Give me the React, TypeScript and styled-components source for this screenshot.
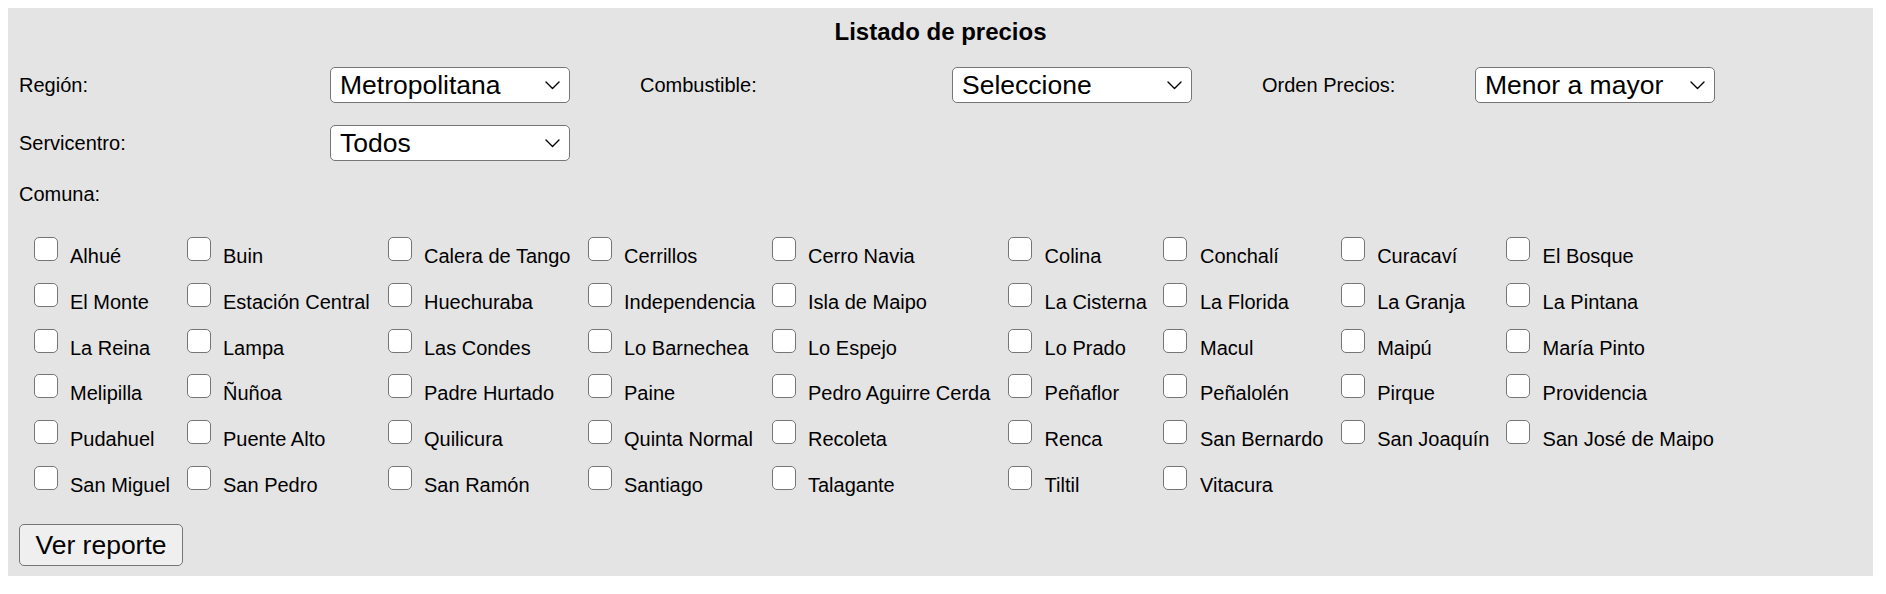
import React from "react";
import styled, { createGlobalStyle } from "styled-components";

const GlobalStyle = createGlobalStyle`
  html, body {
    margin: 0;
    padding: 0;
    background: #ffffff;
  }
  body {
    margin: 8px;
    font-family: "Liberation Sans", Arial, Helvetica, sans-serif;
    color: #000;
  }
`;

const Panel = styled.section`
  width: 1865px;
  box-sizing: border-box;
  background: #e4e4e4;
  padding: 10px 0 10px;
`;

const Title = styled.h1`
  margin: 0;
  font-size: 24px;
  line-height: 28px;
  font-weight: 700;
  text-align: center;
`;

const Body = styled.div`
  padding-left: 11px;
`;

const Filters = styled.div`
  display: grid;
  grid-template-columns: 311px 310px 312px 310px 213px 240px;
  row-gap: 22px;
  align-items: center;
  margin-top: 21px;
`;

const FieldLabel = styled.label<{ $rowStart?: boolean }>`
  font-size: 20px;
  line-height: 23px;
  ${(p) => (p.$rowStart ? "grid-column: 1;" : "")}
`;

const SelectWrap = styled.div`
  position: relative;
  width: 240px;
  height: 36px;
`;

const Select = styled.select`
  appearance: none;
  -webkit-appearance: none;
  width: 100%;
  height: 100%;
  box-sizing: border-box;
  margin: 0;
  padding: 0 34px 0 9px;
  font-family: "Liberation Sans", Arial, Helvetica, sans-serif;
  font-size: 26.5px;
  line-height: 34px;
  color: #000;
  background: #ffffff;
  border: 1.5px solid #767676;
  border-radius: 5px;
  outline: none;
`;

const Chevron = styled.svg`
  position: absolute;
  right: 10px;
  top: 14px;
  width: 15px;
  height: 9px;
  pointer-events: none;
`;

const CommuneGrid = styled.div`
  display: grid;
  grid-template-columns: 153px 201px 200px 184px 236.6px 155.4px 177.2px 165.4px auto;
  grid-auto-rows: 45.8px;
  margin: 24px 0 0 14.5px;
`;

const Commune = styled.label`
  display: flex;
  align-items: flex-start;
  gap: 12.5px;
  padding-top: 7px;
  font-size: 20px;
  line-height: 23px;
  white-space: nowrap;
`;

const Box = styled.input`
  appearance: none;
  -webkit-appearance: none;
  flex: none;
  width: 24px;
  height: 24px;
  margin: 0;
  box-sizing: border-box;
  background: #ffffff;
  border: 1.5px solid #767676;
  border-radius: 5px;
`;

const CommuneName = styled.span`
  margin-top: 8px;
`;

const ReportButton = styled.button`
  display: block;
  margin-top: 19.5px;
  width: 164px;
  height: 42px;
  box-sizing: border-box;
  padding: 0;
  font-family: "Liberation Sans", Arial, Helvetica, sans-serif;
  font-size: 26.5px;
  color: #000;
  background: #efefef;
  border: 1.5px solid #767676;
  border-radius: 5px;
`;

const communes = [
  "Alhué", "Buin", "Calera de Tango", "Cerrillos", "Cerro Navia", "Colina", "Conchalí", "Curacaví", "El Bosque",
  "El Monte", "Estación Central", "Huechuraba", "Independencia", "Isla de Maipo", "La Cisterna", "La Florida", "La Granja", "La Pintana",
  "La Reina", "Lampa", "Las Condes", "Lo Barnechea", "Lo Espejo", "Lo Prado", "Macul", "Maipú", "María Pinto",
  "Melipilla", "Ñuñoa", "Padre Hurtado", "Paine", "Pedro Aguirre Cerda", "Peñaflor", "Peñalolén", "Pirque", "Providencia",
  "Pudahuel", "Puente Alto", "Quilicura", "Quinta Normal", "Recoleta", "Renca", "San Bernardo", "San Joaquín", "San José de Maipo",
  "San Miguel", "San Pedro", "San Ramón", "Santiago", "Talagante", "Tiltil", "Vitacura",
];

function Dropdown({ value }: { value: string }) {
  return (
    <SelectWrap>
      <Select defaultValue={value}>
        <option value={value}>{value}</option>
      </Select>
      <Chevron viewBox="0 0 15 9">
        <path d="M1 1 L7.5 7.5 L14 1" fill="none" stroke="#000" strokeWidth="1.4" strokeLinecap="round" strokeLinejoin="round" />
      </Chevron>
    </SelectWrap>
  );
}

export default function App() {
  return (
    <>
      <GlobalStyle />
      <Panel>
        <Title>Listado de precios</Title>
        <Body>
          <Filters>
            <FieldLabel $rowStart>Región:</FieldLabel>
            <Dropdown value="Metropolitana" />
            <FieldLabel>Combustible:</FieldLabel>
            <Dropdown value="Seleccione" />
            <FieldLabel>Orden Precios:</FieldLabel>
            <Dropdown value="Menor a mayor" />
            <FieldLabel $rowStart>Servicentro:</FieldLabel>
            <Dropdown value="Todos" />
            <FieldLabel $rowStart>Comuna:</FieldLabel>
          </Filters>
          <CommuneGrid>
            {communes.map((c) => (
              <Commune key={c}>
                <Box type="checkbox" />
                <CommuneName>{c}</CommuneName>
              </Commune>
            ))}
          </CommuneGrid>
          <ReportButton type="button">Ver reporte</ReportButton>
        </Body>
      </Panel>
    </>
  );
}
